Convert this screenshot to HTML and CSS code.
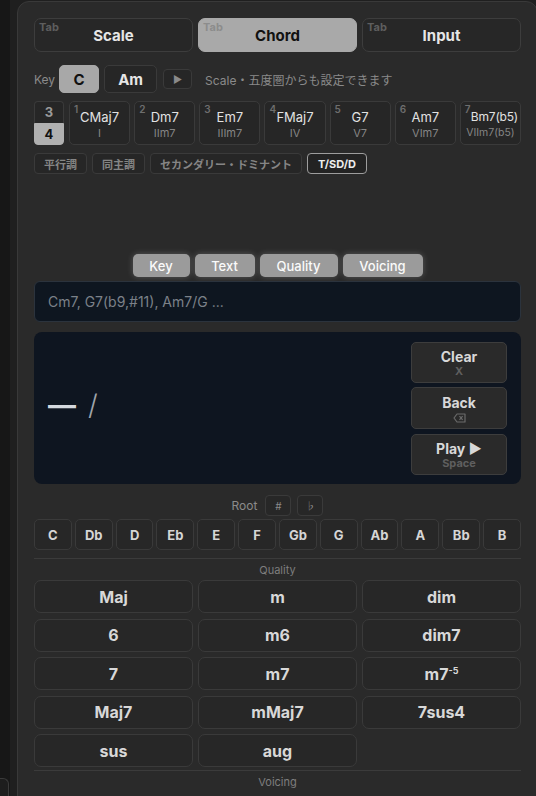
FILE: index.html
```html
<!DOCTYPE html>
<html lang="ja">
<head>
<meta charset="utf-8">
<title>Chord Input</title>
<link rel="stylesheet" href="styles.css">
</head>
<body>
<div class="app">
  <div class="sidebar"><div class="side-box"></div></div>
  <div class="gutter"></div>
  <main class="panel">
    <nav class="tabs">
      <button class="tab"><span class="tab-hint">Tab</span>Scale</button>
      <button class="tab active"><span class="tab-hint">Tab</span>Chord</button>
      <button class="tab"><span class="tab-hint">Tab</span>Input</button>
    </nav>

    <div class="key-row">
      <span class="key-label">Key</span>
      <button class="key-btn active">C</button>
      <button class="key-btn">Am</button>
      <button class="play-mini">▶</button>
      <span class="key-note">Scale・五度圏からも設定できます</span>
    </div>

    <div class="chord-row">
      <div class="stack">
        <button class="stack-btn">3</button>
        <button class="stack-btn active">4</button>
      </div>
      <button class="chord"><span class="deg">1</span><span class="cname">CMaj7</span><span class="roman">I</span></button>
      <button class="chord"><span class="deg">2</span><span class="cname">Dm7</span><span class="roman">IIm7</span></button>
      <button class="chord"><span class="deg">3</span><span class="cname">Em7</span><span class="roman">IIIm7</span></button>
      <button class="chord"><span class="deg">4</span><span class="cname">FMaj7</span><span class="roman">IV</span></button>
      <button class="chord"><span class="deg">5</span><span class="cname">G7</span><span class="roman">V7</span></button>
      <button class="chord"><span class="deg">6</span><span class="cname">Am7</span><span class="roman">VIm7</span></button>
      <button class="chord"><span class="deg">7</span><span class="cname">Bm7(b5)</span><span class="roman">VIIm7(b5)</span></button>
    </div>

    <div class="func-row">
      <button class="func">平行調</button>
      <button class="func">同主調</button>
      <button class="func">セカンダリー・ドミナント</button>
      <button class="func on">T/SD/D</button>
    </div>

    <div class="modes">
      <button class="mode">Key</button>
      <button class="mode">Text</button>
      <button class="mode">Quality</button>
      <button class="mode">Voicing</button>
    </div>

    <div class="text-input">Cm7, G7(b9,#11), Am7/G ...</div>

    <section class="display">
      <div class="readout"><span class="dash">—</span><span class="slash">/</span></div>
      <div class="actions">
        <button class="act"><span class="act-main">Clear</span><span class="act-sub">X</span></button>
        <button class="act"><span class="act-main">Back</span>
          <svg class="bs-icon" width="13" height="10" viewBox="0 0 13 10"><path d="M4 1 H12 V9 H4 L1 5 Z" fill="none" stroke="#6a6a6a" stroke-width="1.2" stroke-linejoin="round"/><path d="M6.5 3.2 L9.6 6.8 M9.6 3.2 L6.5 6.8" stroke="#6a6a6a" stroke-width="1.2"/></svg>
        </button>
        <button class="act"><span class="act-main">Play ▶</span><span class="act-sub">Space</span></button>
      </div>
    </section>

    <div class="root-head">
      <span class="sec-label">Root</span>
      <button class="acc">#</button>
      <button class="acc">♭</button>
    </div>
    <div class="roots">
      <button class="root">C</button><button class="root">Db</button><button class="root">D</button><button class="root">Eb</button>
      <button class="root">E</button><button class="root">F</button><button class="root">Gb</button><button class="root">G</button>
      <button class="root">Ab</button><button class="root">A</button><button class="root">Bb</button><button class="root">B</button>
    </div>

    <div class="divider"></div>
    <div class="sec-title">Quality</div>
    <div class="quality">
      <button class="q">Maj</button><button class="q">m</button><button class="q">dim</button>
      <button class="q">6</button><button class="q">m6</button><button class="q">dim7</button>
      <button class="q">7</button><button class="q">m7</button><button class="q">m7<sup>-5</sup></button>
      <button class="q">Maj7</button><button class="q">mMaj7</button><button class="q">7sus4</button>
      <button class="q">sus</button><button class="q">aug</button>
    </div>
    <div class="divider d2"></div>
    <div class="sec-title">Voicing</div>
    <div class="divider d3"></div>
  </main>
</div>
</body>
</html>
```

FILE: styles.css
```css
* { box-sizing: border-box; }
html, body { margin: 0; padding: 0; }
body {
  width: 536px;
  height: 796px;
  overflow: hidden;
  background: #1f1f1f;
  font-family: "Inter", "Liberation Sans", "Noto Sans CJK JP", sans-serif;
  color: #e0e0e0;
}
button {
  font-family: inherit;
  margin: 0;
  padding: 0;
  cursor: pointer;
}
.app { display: flex; height: 796px; }
.sidebar {
  width: 10px;
  flex: none;
  background: #171717;
  display: flex;
  flex-direction: column;
  justify-content: flex-end;
}
.side-box {
  height: 18px;
  width: 9px;
  border: 1px solid #3a3a3a;
  border-left: none;
  border-bottom: none;
  border-radius: 0 6px 0 0;
  background: #1d1d1d;
}
.gutter { width: 7px; flex: none; }
.panel {
  width: 521px;
  flex: none;
  margin-top: 1px;
  height: 820px;
  background: #2a2a2a;
  border: 1px solid #393939;
  border-radius: 12px 12px 0 0;
  padding: 16px 16px 0 16px;
  display: flex;
  flex-direction: column;
}
.panel > * { flex-shrink: 0; }

/* tabs */
.tabs { display: grid; grid-template-columns: 1fr 1fr 1fr; gap: 5px; }
.tab {
  position: relative;
  height: 34px;
  background: #272727;
  border: 1px solid #3d3d3d;
  border-radius: 7px;
  color: #e6e6e6;
  font-size: 15px;
  font-weight: 700;
}
.tab.active { background: #a9a9a9; border-color: #a9a9a9; color: #111; }
.tab-hint {
  position: absolute;
  left: 4px;
  top: 1px;
  font-size: 11px;
  font-weight: 700;
  color: #5e5e5e;
}
.tab.active .tab-hint { color: #8c8c8c; }

/* key row */
.key-row { margin-top: 13px; height: 28px; display: flex; align-items: center; gap: 5px; }
.key-label { font-size: 12px; color: #8a8a8a; margin-right: -1px; }
.key-btn {
  height: 28px;
  background: #262626;
  border: 1px solid #3a3a3a;
  border-radius: 5px;
  color: #e6e6e6;
  font-size: 15px;
  font-weight: 700;
  width: 53px;
}
.key-btn.active { width: 40px; background: #a8a8a8; border-color: #a8a8a8; color: #111; }
.play-mini {
  width: 29px;
  height: 20px;
  margin-left: 1px;
  background: #262626;
  border: 1px solid #3a3a3a;
  border-radius: 4px;
  color: #8a8a8a;
  font-size: 10px;
}
.key-note { margin-left: 8px; font-size: 12px; color: #8a8a8a; }

/* chord row */
.chord-row { margin-top: 8px; height: 44px; display: flex; gap: 4px; }
.stack { width: 30px; flex: none; display: flex; flex-direction: column; margin-right: 1px; }
.stack-btn {
  flex: 1;
  background: #262626;
  border: 1px solid #3a3a3a;
  color: #9a9a9a;
  font-size: 13px;
  font-weight: 700;
}
.stack-btn:first-child { border-radius: 4px 4px 0 0; border-bottom: none; }
.stack-btn.active { background: #b0b0b0; border-color: #b0b0b0; color: #111; border-radius: 0 0 4px 4px; }
.chord {
  position: relative;
  flex: 1;
  background: #262626;
  border: 1px solid #3a3a3a;
  border-radius: 5px;
  display: flex;
  flex-direction: column;
  align-items: center;
  justify-content: center;
  gap: 1px;
  padding-top: 2px;
}
.deg { position: absolute; left: 4px; top: 1px; font-size: 10px; color: #6e6e6e; font-weight: 600; line-height: 12px; }
.cname { font-size: 13px; color: #e2e2e2; line-height: 16px; }
.roman { font-size: 11px; color: #858585; line-height: 14px; }
.chord:last-child .cname { font-size: 12px; letter-spacing: -0.2px; margin-left: 8px; }
.chord:last-child .roman { font-size: 10.5px; }

/* function row */
.func-row { margin-top: 8px; height: 21px; display: flex; gap: 5px; }
.func {
  height: 21px;
  padding: 0 9px;
  background: #262626;
  border: 1px solid #3a3a3a;
  border-radius: 4px;
  color: #858585;
  font-size: 11px;
  font-weight: 700;
}
.func.on { border-color: #9d9d9d; color: #ededed; background: #232323; padding: 0 10px; }

/* mode tabs */
.modes { margin-top: 80px; height: 23px; display: flex; justify-content: center; gap: 5px; }
.mode {
  height: 23px;
  padding: 0 13px;
  background: #9b9b9b;
  border: none;
  border-radius: 5px;
  color: #fafafa;
  font-size: 13px;
  font-weight: 500;
  box-shadow: 0 0 6px rgba(255, 255, 255, 0.22);
}
.mode:nth-child(1) { width: 57px; }
.mode:nth-child(2) { width: 60px; }
.mode:nth-child(3) { width: 78px; }
.mode:nth-child(4) { width: 80px; }

/* text input */
.text-input {
  margin-top: 4px;
  height: 41px;
  background: #0e1620;
  border: 1px solid #2b333d;
  border-radius: 6px;
  padding: 0 13px;
  display: flex;
  align-items: center;
  font-size: 14px;
  color: #7b8189;
}

/* display */
.display {
  margin-top: 10px;
  height: 152px;
  background: #0e1520;
  border-radius: 8px;
  padding: 10px 14px 9px 14px;
  display: flex;
  align-items: stretch;
}
.readout { flex: 1; display: flex; align-items: center; gap: 12px; padding-bottom: 8px; }
.dash { font-size: 28px; color: #d4d8de; font-weight: 700; }
.slash { font-size: 28px; color: #a0a5ac; font-weight: 300; }
.actions { width: 96px; display: flex; flex-direction: column; gap: 4px; }
.act {
  height: 41px;
  background: #2a2a2a;
  border: 1px solid #3d3d3d;
  border-radius: 5px;
  display: flex;
  flex-direction: column;
  align-items: center;
  justify-content: center;
}
.act:nth-child(2) { height: 42px; }
.act:nth-child(3) { margin-top: 1px; }
.act-main { font-size: 14px; font-weight: 700; color: #d8d8d8; line-height: 17px; }
.act-sub { font-size: 11px; font-weight: 700; color: #5f5f5f; line-height: 13px; }
.bs-icon { margin-top: 2px; }

/* root */
.root-head { margin-top: 11px; height: 21px; display: flex; justify-content: center; align-items: center; gap: 6px; }
.sec-label { font-size: 12px; color: #8a8a8a; margin-right: 2px; }
.acc {
  width: 26px;
  height: 21px;
  background: #272727;
  border: 1px solid #3a3a3a;
  border-radius: 4px;
  color: #8a8a8a;
  font-size: 10px;
}
.roots { margin-top: 3px; display: grid; grid-template-columns: repeat(12, 1fr); gap: 3px; }
.root {
  height: 31px;
  background: #272727;
  border: 1px solid #3a3a3a;
  border-radius: 5px;
  color: #d6d6d6;
  font-size: 13px;
  font-weight: 700;
}

.divider { height: 1px; background: #3b3b3b; margin-top: 8px; }
.sec-title { text-align: center; font-size: 11px; color: #7e7e7e; margin-top: 5px; line-height: 13px; }

.quality { margin-top: 3px; display: grid; grid-template-columns: 1fr 1fr 1fr; column-gap: 5px; row-gap: 5.5px; }
.q {
  height: 33px;
  background: #272727;
  border: 1px solid #3a3a3a;
  border-radius: 7px;
  color: #d8d8d8;
  font-size: 16px;
  font-weight: 700;
}
.q sup { font-size: 9px; vertical-align: 6px; }
.d2 { margin-top: 3px; }
.d3 { margin-top: 8px; background: #333; }
```
